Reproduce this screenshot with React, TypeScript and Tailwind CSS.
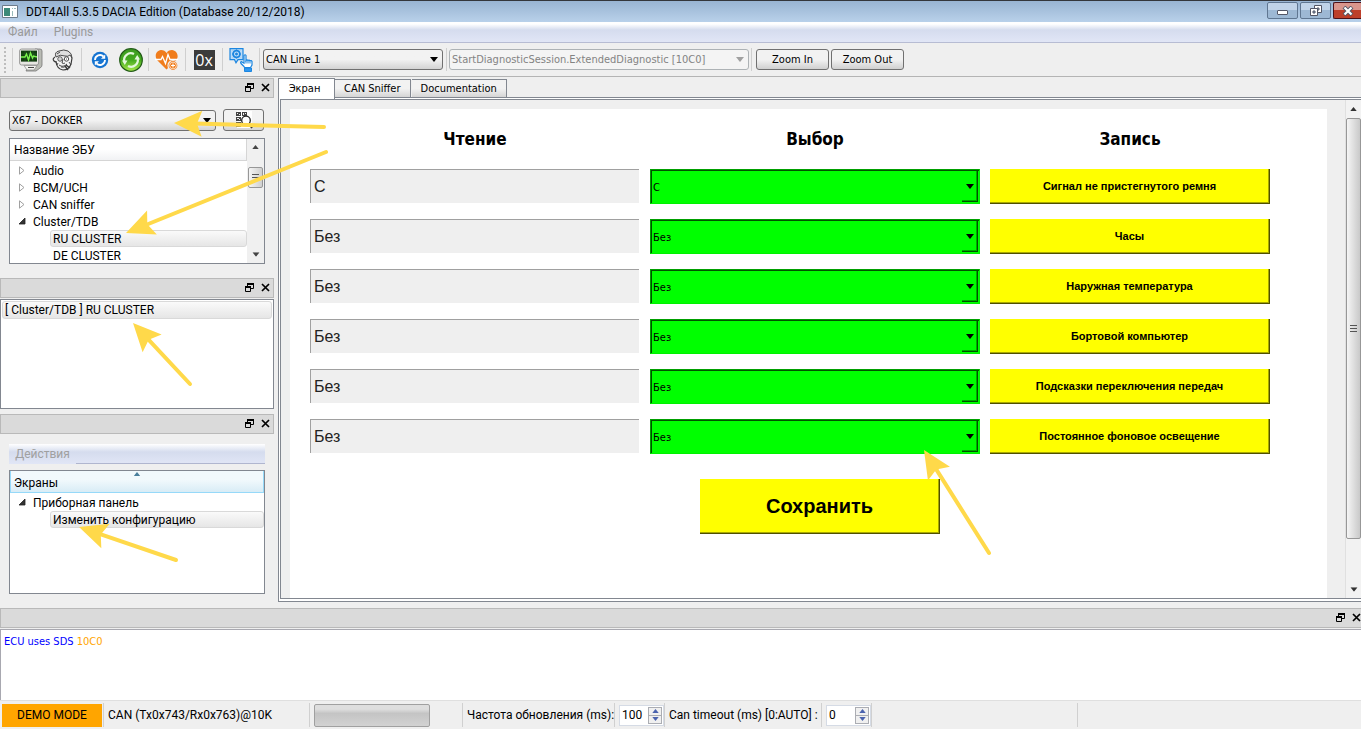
import { ReactNode, useState } from "react";

const BORDER = "border-[#828790]";

const SMALL_FONT = "font-['DejaVu_Sans_Condensed','DejaVu_Sans',sans-serif] text-[11px]";

const tabs = ["Экран", "CAN Sniffer", "Documentation"];

const ecus = [
  { name: "Audio" },
  { name: "BCM/UCH" },
  { name: "CAN sniffer" },
  { name: "Cluster/TDB", children: ["RU CLUSTER", "DE CLUSTER"] },
];

const parameters = [
  { value: "С", label: "Сигнал не пристегнутого ремня" },
  { value: "Без", label: "Часы" },
  { value: "Без", label: "Наружная температура" },
  { value: "Без", label: "Бортовой компьютер" },
  { value: "Без", label: "Подсказки переключения передач" },
  { value: "Без", label: "Постоянное фоновое освещение" },
];

const Caret = ({ className = "" }: { className?: string }) => (
  <svg viewBox="0 0 8 5" className={`pointer-events-none h-[5px] w-2 ${className}`}>
    <path d="M0 0h8L4 5z" fill="currentColor" />
  </svg>
);

const UpCaret = () => (
  <svg viewBox="0 0 8 5" className="h-1 w-[7px]">
    <path d="M0 5h8L4 0z" fill="currentColor" />
  </svg>
);

const Grip = () => (
  <>
    <span className="h-px w-[7px] bg-[#555]" />
    <span className="h-px w-[7px] bg-[#555]" />
    <span className="h-px w-[7px] bg-[#555]" />
  </>
);

interface ComboProps {
  label: string;
  value: string;
  disabled?: boolean;
  className?: string;
}
const Combo = ({ label, value, disabled, className = "" }: ComboProps) => (
  <div className={`relative ${className}`}>
    <select
      aria-label={label}
      disabled={disabled}
      className={`block h-[21px] w-full appearance-none rounded-[3px] border pl-[2px] pr-5 pt-[2px] ${
        disabled
          ? "border-[#adb2b5] bg-[#f4f4f4] text-[#838383] opacity-100"
          : "border-[#707070] bg-linear-to-b from-[#f2f2f2] from-50% to-[#d3d3d3] text-black"
      }`}
    >
      <option>{value}</option>
    </select>
    <Caret
      className={`absolute right-[5px] top-2 ${disabled ? "text-[#a0a0a0]" : "text-black"}`}
    />
  </div>
);

const FloatIcon = () => (
  <svg viewBox="0 0 9 9" className="size-[9px]" fill="none" stroke="#000">
    <path d="M2.500 3.500V.5h6v5H6" />
    <path d="M2 1h7M0 4h6" strokeWidth="2" />
    <path d="M.5 3.500h5v5h-5z" />
  </svg>
);

const CloseIcon = () => (
  <svg viewBox="0 0 9 9" className="size-[9px]">
    <path d="M1 1l7 7M8 1L1 8" stroke="#000" strokeWidth="1.700" />
  </svg>
);

const DockTitle = ({ className = "" }: { className?: string }) => (
  <div
    className={`flex h-5 shrink-0 items-center justify-end gap-[7px] border border-[#b9b9b9] bg-[#dadada] pb-px ${className}`}
  >
    <button aria-label="Float">
      <FloatIcon />
    </button>
    <button aria-label="Close panel">
      <CloseIcon />
    </button>
  </div>
);

const Separator = () => <div className="mx-[2px] h-[23px] w-px shrink-0 bg-[#cfcfcf]" />;

interface ToolProps {
  label: string;
  className?: string;
  children: ReactNode;
}
const Tool = ({ label, className = "w-8", children }: ToolProps) => (
  <button aria-label={label} className={`flex h-7 shrink-0 items-center justify-center ${className}`}>
    {children}
  </button>
);

const MonitorIcon = () => (
  <svg viewBox="0 0 24 24" className="size-6">
    <path d="M16 1h5q2 0 2 2v14q0 2-2 3l-4 3H7l2-4z" fill="#b9bbb4" stroke="#777" strokeWidth=".8" />
    <rect x=".6" y="1" width="19" height="16" rx="2" fill="#e6e6e2" stroke="#858585" strokeWidth=".8" />
    <rect x="2" y="2.600" width="16" height="11" fill="#123c10" />
    <path d="M2 6h16M2 10h16M6 3v10M10 3v10M14 3v10" stroke="#2b6a25" strokeWidth=".5" />
    <path d="M2 9h4l1.500-3 2 6 2-7 2 5 1-2 3.500 1" fill="none" stroke="#79f24d" strokeWidth="1.400" />
    <path d="M5 17.500h13l-3 4.500H8z" fill="#f1f1ee" stroke="#888" strokeWidth=".7" />
    <path d="M9 19.500h6" stroke="#444" />
  </svg>
);

const FaceIcon = () => (
  <svg viewBox="0 0 24 24" className="size-6" fill="none" stroke="#3a3a3a" strokeWidth=".9">
    <circle cx="12.500" cy="12" r="8.500" fill="#f3f3f3" stroke="none" />
    <path d="M5 9Q3 4 8 3q5-2 9 0 4 2 4 7l-2-3q-2 2-5 1Q9 6 5 9z" fill="#dedede" />
    <path d="M4 9q-3 2-1 4 1 1 3 1M5 14q1 7 7 8 6 0 8-6l1-6" strokeWidth="1.200" />
    <circle cx="9" cy="11" r="2.200" fill="#fff" />
    <circle cx="15.500" cy="11" r="2.200" fill="#fff" />
    <path d="M8.500 11h1M15 11h1M12 11l-1 4q2 1 3 0M8 17q4 3 8-1M10 19q3 1 5-1M6 6l3-2M18 14l2 3M7 15l-1 2" />
    <path d="M14 18l3 4M15 17l4 3" strokeWidth="1.400" />
  </svg>
);

const SyncIcon = () => (
  <svg viewBox="0 0 18 18" className="size-[18px]">
    <circle cx="9" cy="9" r="8.200" fill="#1674d1" />
    <path d="M4 9a5 5 0 0 1 8.500-3.500M14 9a5 5 0 0 1-8.500 3.500" fill="none" stroke="#fff" strokeWidth="1.800" />
    <path d="M14.200 3.500v4.200H10zM3.800 14.500v-4.200H8z" fill="#fff" />
  </svg>
);

const ReloadIcon = () => (
  <svg viewBox="0 0 24 24" className="size-6">
    <defs>
      <linearGradient id="reload" x2="0" y2="1">
        <stop stopColor="#3c9b21" />
        <stop offset=".5" stopColor="#44a91f" />
        <stop offset="1" stopColor="#a9ea4b" />
      </linearGradient>
    </defs>
    <circle cx="12" cy="12" r="11.300" fill="url(#reload)" stroke="#235c18" strokeWidth="1.200" />
    <path
      d="M5.500 14A6.700 6.700 0 0 1 15 6M18.500 10A6.700 6.700 0 0 1 9 18"
      fill="none"
      stroke="#e4f7dc"
      strokeWidth="2.200"
    />
    <path d="M3 12.500h5.500L5.800 17zM21 11.500h-5.500L18.200 7z" fill="#e4f7dc" />
  </svg>
);

const HeartIcon = () => (
  <svg viewBox="0 0 24 22" className="h-[22px] w-6">
    <path d="M11.500 20.500L2.500 11.500C-1 7.500 1 1.500 6 1c2.500 0 4.500 1 5.500 3C12.500 2 14.500 1 17 1c5 .5 7.500 6.500 4 10.500z" fill="#f07c1b" />
    <path d="M0 10.500h6l1.500-3 3 7 2.500-9 2 5h8" fill="none" stroke="#fff" strokeWidth="1.300" />
    <circle cx="18" cy="16.500" r="5" fill="#f07c1b" stroke="#efefef" strokeWidth="1.200" />
    <circle cx="18" cy="16.500" r="3.400" fill="none" stroke="#fff" strokeWidth=".7" />
    <path d="M18 14.500v4M16 16.500h4" stroke="#fff" strokeWidth="1.100" />
  </svg>
);

const TouchIcon = () => (
  <svg viewBox="0 0 24 24" className="size-6" fill="none" stroke="#1c86e0">
    <path d="M1 .7h13v11H9l-2 3-1.500-3H1z" fill="#bddcf7" strokeWidth="1.200" />
    <circle cx="7.500" cy="6" r="3.400" strokeWidth="1.800" />
    <circle cx="7.500" cy="6" r="1" fill="#1c86e0" />
    <path d="M7.500 1.500v1.500M7.500 9v1.500M3 6h1.500M10.500 6H12M4.300 2.800l1 1M9.700 8.200l1 1M10.700 2.800l-1 1M5.300 8.200l-1 1" />
    <path d="M15 18.500l-3-3q-1-1.500.5-1.800l2.500 1.500V7.500q1.200-1.500 2 0v5q1-1.200 2 0 1-1 2 .3 1.500-.8 2 .7v3.500l-1.500 2.500h-6z" fill="#fff" strokeWidth="1.200" />
    <path d="M17 12.500v3M19 12.500v3M21 13v2.500" />
    <path d="M15.500 20h7v3.500h-7z" fill="#2f97f0" />
  </svg>
);

const ScanIcon = () => (
  <svg viewBox="0 0 18 18" className="size-[18px]">
    <rect x="2" width="15" height="17" fill="#fff" />
    <path d="M1 1h5v4H1zM7 1h5v4H7zM1 6h5v4H1zM1 11h5v5H1z" fill="#444" />
    <path d="M2 2h1v1H2zM4 3h1v1H4zM8 2h1v2H8zM10 2h1v1h-1zM2 7h2v1H2zM4 8h1v1H4zM2 12h1v1H2zM3 14h2v1H3z" fill="#eee" />
    <circle cx="11" cy="9.500" r="4.300" fill="#fff" stroke="#222" strokeWidth="1.300" />
    <path d="M14 13l3 4" stroke="#222" strokeWidth="1.800" />
  </svg>
);

const TreeArrow = ({ open }: { open?: boolean }) => (
  <svg viewBox="0 0 8 9" className="mr-[7px] h-[9px] w-2 shrink-0">
    {open ? (
      <path d="M7 1v6H1z" fill="#333" stroke="#222" strokeWidth=".8" />
    ) : (
      <path d="M1.500.8v7.400L6 4.500z" fill="#fff" stroke="#a0a0a0" />
    )}
  </svg>
);

const TreeRow = ({ name, open }: { name: string; open?: boolean }) => (
  <li className="flex h-[17px] items-center pl-2">
    <TreeArrow open={open} />
    {name}
  </li>
);

const TreeLeaf = ({ name, selected }: { name: string; selected?: boolean }) => (
  <li
    className={`ml-10 flex h-[17px] items-center rounded-[3px] border pl-[2px] ${
      selected
        ? "border-[#d9d9d9] bg-linear-to-b from-[#fafafa] to-[#e6e6e6]"
        : "border-transparent"
    }`}
  >
    {name}
  </li>
);

interface SpinProps {
  id: string;
  initial: number;
}
const SpinBox = ({ id, initial }: SpinProps) => {
  const [value, setValue] = useState(initial);
  return (
    <div className="flex h-[21px] w-[45px] items-center border border-[#d5dbe5] bg-white pr-px">
      <input
        id={id}
        type="number"
        value={value}
        onChange={(e) => setValue(Number(e.target.value))}
        className="w-0 flex-1 appearance-none bg-transparent pl-[2px] outline-none [-moz-appearance:textfield] [&::-webkit-inner-spin-button]:appearance-none"
      />
      <div className="flex h-[17px] w-[14px] flex-col divide-y divide-[#abadb3] border border-[#abadb3] bg-[#f0f0f0] text-[#4a62ae]">
        <button
          aria-label="Increase"
          onClick={() => setValue(value + 1)}
          className="flex flex-1 items-center justify-center"
        >
          <UpCaret />
        </button>
        <button
          aria-label="Decrease"
          onClick={() => setValue(Math.max(0, value - 1))}
          className="flex flex-1 items-center justify-center"
        >
          <svg viewBox="0 0 8 5" className="h-1 w-[7px]">
            <path d="M0 0h8L4 5z" fill="currentColor" />
          </svg>
        </button>
      </div>
    </div>
  );
};

const TitleBar = () => (
  <header className="flex h-[22px] items-center border-t border-[#33363b] bg-linear-to-b from-[#98b4d2] to-[#b9d1ea] pl-[2px]">
    <svg viewBox="0 0 16 13" className="mr-2 h-[13px] w-4">
      <path d="M.5.5h15v12H.5z" fill="#fff" stroke="#6d7b8a" />
      <path d="M2 3h6v8H2z" fill="#3c8a78" />
      <path d="M10 3h1v1h-1zM12 3h2v1h-2zM10 6h1v5h-1z" fill="#9bb" />
    </svg>
    <h1 className="flex-1">DDT4All 5.3.5 DACIA Edition (Database 20/12/2018)</h1>
    <div className="flex gap-[2px] self-start pt-px">
      <button
        aria-label="Minimize"
        className="flex h-[17px] w-[31px] items-center justify-center rounded-[2px] border border-[#5f7691] bg-linear-to-b from-[#c0d3e8] from-50% to-[#9db8d4] to-50%"
      >
        <span className="mt-1 h-[5px] w-[11px] rounded-[1px] border border-[#535666] bg-white" />
      </button>
      <button
        aria-label="Restore"
        className="flex h-[17px] w-[31px] items-center justify-center rounded-[2px] border border-[#5f7691] bg-linear-to-b from-[#c0d3e8] from-50% to-[#9db8d4] to-50%"
      >
        <svg viewBox="0 0 12 11" className="h-[11px] w-3" fill="#fff" stroke="#535666">
          <path d="M4.500.5h7v7h-7z" />
          <path d="M7 3h2v2H7z" fill="#9db8d4" />
          <path d="M.5 3.500h7v7h-7z" />
          <path d="M3 6h2v2H3z" fill="#9db8d4" />
        </svg>
      </button>
      <button
        aria-label="Close"
        className="flex h-[17px] w-7 items-center justify-center rounded-l-[2px] border border-r-0 border-[#4d1118] bg-linear-to-b from-[#d9958c] from-50% to-[#bd3f2a] to-50%"
      >
        <svg viewBox="0 0 12 10" className="h-[10px] w-3">
          <path d="M2 1l8 8M10 1L2 9" stroke="#535666" strokeWidth="4" />
          <path d="M2.500 1.500l7 7M9.500 1.500l-7 7" stroke="#fff" strokeWidth="2.200" />
        </svg>
      </button>
    </div>
  </header>
);

const MenuBar = () => (
  <nav className="flex h-[21px] items-center gap-4 border-b border-[#b7bcd3] bg-linear-to-b from-white from-10% via-[#d5dcee] via-40% to-[#e1e6f6] pl-2 text-[#9a9a9a]">
    <button>Файл</button>
    <button>Plugins</button>
  </nav>
);

const ToolBar = () => (
  <div className={`flex h-[34px] shrink-0 items-center border-b border-[#b4b4b4] pl-1 ${SMALL_FONT}`}>
    <div className="mr-1 h-[26px] w-[2px] border-l-2 border-dotted border-[#bdbdbd]" />
    <Separator />
    <Tool label="Diagnostic">
      <MonitorIcon />
    </Tool>
    <Tool label="Expert mode">
      <FaceIcon />
    </Tool>
    <Separator />
    <Tool label="Refresh" className="w-[31px]">
      <SyncIcon />
    </Tool>
    <Tool label="Auto refresh" className="w-[31px]">
      <ReloadIcon />
    </Tool>
    <Separator />
    <Tool label="Tester present">
      <HeartIcon />
    </Tool>
    <Separator />
    <Tool label="Hexadecimal">
      <span className="h-5 w-[21px] bg-[#3b3b3b] text-center font-['Open_Sans',sans-serif] text-base leading-5 text-white">
        0x
      </span>
    </Tool>
    <Separator />
    <Tool label="Commands">
      <TouchIcon />
    </Tool>
    <Separator />
    <Combo label="CAN line" value="CAN Line 1" className="mx-px w-[180px]" />
    <Separator />
    <Combo
      label="Diagnostic session"
      value="StartDiagnosticSession.ExtendedDiagnostic [10C0]"
      disabled
      className="w-[300px]"
    />
    <Separator />
    <div className="flex gap-[2px] pl-[2px]">
      {["Zoom In", "Zoom Out"].map((label) => (
        <button
          key={label}
          className="h-[21px] w-[73px] rounded-[3px] border border-[#707070] bg-linear-to-b from-[#f2f2f2] from-50% to-[#d0d0d0] pt-px leading-4"
        >
          {label}
        </button>
      ))}
    </div>
  </div>
);

const EcuPanel = () => (
  <section className="flex flex-col gap-[7px] px-[9px] pb-[14px] pt-[11px]">
    <div className={`flex items-center gap-[7px] pr-px ${SMALL_FONT}`}>
      <Combo label="Vehicle" value="X67 - DOKKER" className="flex-1" />
      <button
        aria-label="Scan"
        className="flex h-[22px] w-[41px] items-center justify-center rounded-[3px] border border-[#707070] bg-linear-to-b from-[#f2f2f2] from-50% to-[#d3d3d3]"
      >
        <ScanIcon />
      </button>
    </div>
    <div className={`flex h-[126px] border ${BORDER} bg-white`}>
      <div className="flex-1 overflow-hidden">
        <div className="mb-px flex h-[22px] items-center border-b border-r border-[#d5d5d5] bg-linear-to-b from-white from-50% to-[#f1f2f4] pl-1 pt-px">
          Название ЭБУ
        </div>
        <ul>
          {ecus.map(({ name, children }) => (
            <li key={name}>
              <ul>
                <TreeRow name={name} open={!!children} />
                {children?.map((child, i) => (
                  <TreeLeaf key={child} name={child} selected={i === 0} />
                ))}
              </ul>
            </li>
          ))}
        </ul>
      </div>
      <div className="flex w-[17px] flex-col items-center justify-between bg-[#f0f0f0] py-[6px] text-[#444]">
        <UpCaret />
        <div className="mb-[46px] flex h-[21px] w-[15px] shrink-0 flex-col items-center justify-center gap-[2px] rounded-[2px] border border-[#979797] bg-linear-to-r from-[#f5f5f5] to-[#cfcfcf]">
          <Grip />
        </div>
        <Caret className="scale-90" />
      </div>
    </div>
  </section>
);

const ScreensPanel = () => (
  <section className="flex flex-1 flex-col px-[9px] pb-[14px] pt-[10px]">
    <div className="mb-[6px] flex h-5 bg-linear-to-b from-white via-[#d5dcee] via-40% to-[#e1e6f6] text-[#a0a0a0]">
      <button className="w-[67px]">Действия</button>
      <div className="flex-1 border-b border-[#b0b6cf]" />
    </div>
    <div className={`min-h-[124px] flex-1 border ${BORDER} bg-white`}>
      <div className="relative mb-px flex h-[22px] items-center border border-t-0 border-[#96d9f9] bg-linear-to-b from-[#f2f9fc] from-40% to-[#d8ecf6] pl-[3px] pt-[2px]">
        Экраны
        <span className="absolute left-1/2 top-px -translate-x-1/2 text-[#4a7f9c]">
          <svg viewBox="0 0 8 5" className="h-1 w-[7px]">
            <path d="M0 5h8L4 0z" fill="currentColor" />
          </svg>
        </span>
      </div>
      <ul>
        <TreeRow name="Приборная панель" open />
        <TreeLeaf name="Изменить конфигурацию" selected />
      </ul>
    </div>
  </section>
);

const ParameterRow = ({ value, label }: { value: string; label: string }) => (
  <>
    <input
      readOnly
      aria-label={label}
      value={value}
      className="mr-px h-[34px] min-w-0 border-l border-t border-[#a0a0a0] bg-[#efefef] pl-[3px] font-['Liberation_Sans',sans-serif] text-base text-[#222] outline-none"
    />
    <div className="relative border border-b-[#00f000] border-l-[#00a000] border-r-[#00f000] border-t-[#00a000]">
      <select
        aria-label={label}
        className={`block h-[33px] w-full appearance-none border-l border-t border-[#005000] bg-[#00ff00] pl-px pt-[2px] ${SMALL_FONT}`}
      >
        <option>{value}</option>
      </select>
      <span className="pointer-events-none absolute bottom-px right-px top-px flex w-4 items-center justify-center border-b border-r border-[#005000] shadow-[inset_-1px_-1px_0_#00a800]">
        <Caret />
      </span>
    </div>
    <button className="h-[35px] border-b border-r border-[#505000] bg-[#ffff00] font-['Liberation_Sans',sans-serif] text-[11px] font-bold leading-4 shadow-[inset_-1px_-1px_0_#a8a800]">
      {label}
    </button>
  </>
);

const Screen = () => (
  <div className="min-w-0 flex-1 bg-white pl-5 pr-[57px] pt-[15px]">
    <div className="grid grid-cols-[33fr_33fr_28fr] gap-x-[10px] gap-y-[15px]">
      {["Чтение", "Выбор", "Запись"].map((title) => (
        <h2
          key={title}
          className="h-[30px] text-center font-['DejaVu_Sans_Condensed','DejaVu_Sans',sans-serif] text-[17px] font-bold leading-[30px]"
        >
          {title}
        </h2>
      ))}
      {parameters.map((parameter) => (
        <ParameterRow key={parameter.label} {...parameter} />
      ))}
      <button className="col-start-2 mr-10 mt-[10px] h-[55px] w-[240px] justify-self-end border-b border-r border-[#505000] bg-[#ffff00] font-['Liberation_Sans',sans-serif] text-xl font-bold shadow-[inset_-1px_-1px_0_#a8a800]">
        Сохранить
      </button>
    </div>
  </div>
);

const Workspace = () => (
  <main className="flex min-w-0 flex-1 flex-col pb-[6px]">
    <div role="tablist" className={`flex h-[19px] items-end pt-px ${SMALL_FONT}`}>
      {tabs.map((tab, i) => (
        <button
          key={tab}
          role="tab"
          aria-selected={i === 0}
          className={
            i === 0
              ? `relative -mb-[2px] h-[21px] w-[57px] border border-b-0 ${BORDER} bg-white pr-1`
              : `mr-px h-[18px] border border-b-0 border-l-0 ${BORDER} bg-linear-to-b from-[#f2f2f2] from-50% to-[#d5d5d5] px-[9px] pt-px leading-4`
          }
        >
          {tab}
        </button>
      ))}
    </div>
    <div className={`flex flex-1 border border-r-0 ${BORDER} bg-white pb-[2px] pl-px pt-px`}>
      <div className={`flex flex-1 border border-r-0 ${BORDER} bg-[#efefef]`}>
        <div className="flex flex-1 pl-[9px] pr-[18px] pt-[9px]">
          <Screen />
        </div>
        <div className="flex w-4 flex-col items-center justify-between border-l border-[#e0e0e0] bg-[#f2f2f2] pb-[6px] pt-[7px] text-[#333]">
          <UpCaret />
          <div className="my-[7px] flex w-[15px] grow-0 basis-[421px] flex-col items-center justify-center gap-[2px] rounded-[2px] border border-[#979797] bg-linear-to-r from-[#f5f5f5] to-[#c9c9c9]">
            <Grip />
          </div>
          <Caret className="mt-auto scale-90" />
        </div>
      </div>
    </div>
  </main>
);

const StatusSeparator = () => <div className="h-6 w-px shrink-0 bg-[#d0d0d0]" />;

const StatusBar = () => (
  <footer className="flex h-[29px] items-center whitespace-nowrap border-t border-[#dfdfdf] px-[2px]">
    <div className="mr-px flex h-[23px] w-[100px] items-center justify-center bg-[#ffa500]">
      DEMO MODE
    </div>
    <StatusSeparator />
    <div className="w-[205px] pl-1">CAN (Tx0x743/Rx0x763)@10K</div>
    <StatusSeparator />
    <div
      role="progressbar"
      aria-label="Progress"
      className="ml-1 mr-8 h-[23px] w-[116px] rounded-[2px] border border-[#a0a0a0] bg-linear-to-b from-[#dedede] from-20% via-[#c4c4c4] via-40% to-[#d2d2d2]"
    />
    <StatusSeparator />
    <label htmlFor="refresh" className="w-[151px] pl-1">
      Частота обновления (ms):
    </label>
    <StatusSeparator />
    <div className="pl-1">
      <SpinBox id="refresh" initial={100} />
    </div>
    <StatusSeparator />
    <label htmlFor="timeout" className="w-[156px] pl-1">
      Can timeout (ms) [0:AUTO] :
    </label>
    <StatusSeparator />
    <div className="pl-1">
      <SpinBox id="timeout" initial={0} />
    </div>
    <StatusSeparator />
    <div className="w-[205px]" />
    <StatusSeparator />
  </footer>
);

const arrows = [
  { from: [324, 127], to: [174, 123] },
  { from: [326, 152], to: [126, 233] },
  { from: [190, 384], to: [133, 323] },
  { from: [176, 560], to: [79, 527] },
  { from: [989, 553], to: [924, 450] },
];

// Pointers that lie over the whole window
const Arrows = () => (
  <svg
    viewBox="0 0 1361 729"
    className="pointer-events-none absolute left-0 top-0 h-[729px] w-[1361px]"
    fill="#ffd94a"
    stroke="#ffd94a"
  >
    {arrows.map(({ from, to }) => {
      const dx = from[0] - to[0];
      const dy = from[1] - to[1];
      const length = Math.hypot(dx, dy);
      const angle = (Math.atan2(dy, dx) * 180) / Math.PI;
      return (
        <g key={to.join()} transform={`translate(${to[0]} ${to[1]}) rotate(${angle})`}>
          <path d={`M20 0H${length}`} strokeWidth="4" strokeLinecap="round" />
          <path d="M0 0L28-13 23 0 28 13z" stroke="none" />
        </g>
      );
    })}
  </svg>
);

export default function App() {
  return (
    <div className="relative flex min-h-screen flex-col overflow-hidden bg-[#efefef] font-[Roboto,'Open_Sans',sans-serif] text-xs text-black">
      <TitleBar />
      <MenuBar />
      <ToolBar />
      <div className="flex flex-1 gap-1 pt-px">
        <aside className="flex w-[274px] shrink-0 flex-col">
          <DockTitle className="pr-[3px]" />
          <EcuPanel />
          <DockTitle className="pr-[3px]" />
          <div className={`mb-[5px] mt-px h-[110px] border ${BORDER} bg-white p-px`}>
            <div className="flex h-[18px] items-center rounded-[3px] border border-[#d9d9d9] bg-linear-to-b from-[#fafafa] to-[#e6e6e6] pl-[2px]">
              [ Cluster/TDB ] RU CLUSTER
            </div>
          </div>
          <DockTitle className="pr-[3px]" />
          <ScreensPanel />
        </aside>
        <Workspace />
      </div>
      <DockTitle className="border-r-0" />
      <div
        className={`mt-px h-[71px] border-l border-t border-[#a8a8b0] bg-white pl-[3px] pt-1 leading-4 text-[#0000ff] ${SMALL_FONT}`}
      >
        ECU uses SDS <span className="text-[#ffa500]">10C0</span>
      </div>
      <StatusBar />
      <div className="ml-[66%] h-px bg-[#3a4a5c]" />
      <Arrows />
    </div>
  );
}
